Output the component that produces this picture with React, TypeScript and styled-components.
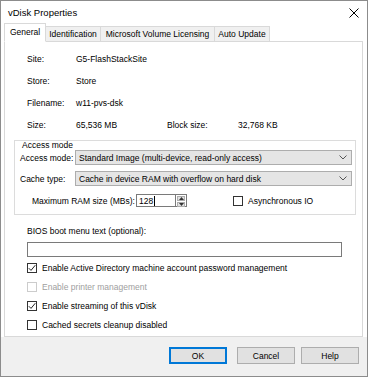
import React from "react";
import styled, { createGlobalStyle } from "styled-components";

const FONT = `"Liberation Sans", Arial, sans-serif`;

const Global = createGlobalStyle`
  html, body { margin: 0; padding: 0; background: #ffffff; }
  body { font-family: ${FONT}; font-size: 8.5px; color: #000; }
  * { box-sizing: border-box; }
`;

const Window = styled.div`
  width: 368px;
  height: 377px;
  border: 1px solid #8c8c8c;
  background: #ffffff;
  display: flex;
  flex-direction: column;
`;

const TitleBar = styled.div`
  height: 23px;
  flex: none;
  display: flex;
  align-items: center;
  justify-content: space-between;
  padding: 0 8px 0 7px;
  font-size: 9.5px;
`;

const CloseBtn = styled.div`
  width: 10px;
  height: 10px;
  display: flex;
  align-items: center;
  justify-content: center;
`;

const TabArea = styled.div`
  flex: 1;
  display: flex;
  flex-direction: column;
  padding: 0 4px 0 3px;
`;

const TabStrip = styled.div`
  height: 18px;
  flex: none;
  display: flex;
  align-items: flex-end;
  margin-bottom: -1px;
  position: relative;
  z-index: 1;
`;

const Tab = styled.div<{ $active?: boolean; $w: number }>`
  width: ${(p) => p.$w}px;
  height: ${(p) => (p.$active ? 19 : 16)}px;
  margin-left: -1px;
  border: 1px solid #d9d9d9;
  border-bottom: ${(p) => (p.$active ? "1px solid #ffffff" : "1px solid #d9d9d9")};
  background: ${(p) => (p.$active ? "#ffffff" : "#f0f0f0")};
  display: flex;
  align-items: center;
  justify-content: center;
  padding-bottom: ${(p) => (p.$active ? 2 : 0)}px;
  white-space: nowrap;
  position: relative;
  z-index: ${(p) => (p.$active ? 2 : 1)};
  &:first-child { margin-left: 0; }
`;

const Panel = styled.div`
  flex: 1;
  border: 1px solid #d9d9d9;
  background: #ffffff;
  display: flex;
  flex-direction: column;
  padding-top: 6px;
`;

const InfoGrid = styled.div`
  display: grid;
  grid-template-columns: 49px 91px 71px auto;
  grid-auto-rows: 22px;
  align-items: center;
  padding-left: 22px;
`;

const GroupBox = styled.div`
  margin: 4px 6px 0 9px;
  border: 1px solid #dcdcdc;
  display: flex;
  flex-direction: column;
  padding: 0 3px 7px 5px;
`;

const Legend = styled.div`
  height: 9px;
  line-height: 9px;
  padding-left: 2px;
`;

const FormRow = styled.div<{ $mt: number; $h: number; $indent?: number }>`
  display: flex;
  align-items: center;
  height: ${(p) => p.$h}px;
  margin-top: ${(p) => p.$mt}px;
  padding-left: ${(p) => p.$indent ?? 0}px;
`;

const RowLabel = styled.div<{ $w?: number }>`
  width: ${(p) => (p.$w ? `${p.$w}px` : "auto")};
  flex: none;
  white-space: nowrap;
`;

const Combo = styled.div`
  flex: 1;
  height: 100%;
  background: #e5e5e5;
  border: 1px solid #adadad;
  display: flex;
  align-items: center;
  justify-content: space-between;
  padding: 0 4px 0 3px;
  white-space: nowrap;
`;

const NumInput = styled.div`
  width: 39px;
  height: 100%;
  border: 1px solid #7a7a7a;
  border-right: none;
  background: #fff;
  display: flex;
  align-items: center;
  padding-left: 2px;
`;

const Caret = styled.span`
  display: inline-block;
  width: 1px;
  height: 10px;
  background: #000;
  margin-left: 1px;
`;

const Spinner = styled.div`
  width: 12px;
  height: 100%;
  border: 1px solid #7a7a7a;
  display: flex;
  flex-direction: column;
  background: #fff;
  padding: 1px;
  gap: 1px;
`;

const SpinHalf = styled.div`
  flex: 1;
  background: #e1e1e1;
  border: 1px solid #adadad;
  display: flex;
  align-items: center;
  justify-content: center;
`;

const CheckWrap = styled.label<{ $disabled?: boolean }>`
  display: flex;
  align-items: center;
  gap: 5px;
  color: ${(p) => (p.$disabled ? "#a0a0a0" : "#000")};
  white-space: nowrap;
`;

const Box = styled.span<{ $disabled?: boolean }>`
  width: 10px;
  height: 10px;
  flex: none;
  border: 1px solid ${(p) => (p.$disabled ? "#cccccc" : "#333333")};
  background: #fff;
  display: flex;
  align-items: center;
  justify-content: center;
`;

const BiosLabel = styled.div`
  margin-top: 11px;
  padding-left: 22px;
  line-height: 11px;
`;

const TextInput = styled.div`
  margin: 5px 0 0 22px;
  width: 315px;
  height: 15px;
  border: 1px solid #7a7a7a;
  background: #fff;
`;

const CheckList = styled.div`
  display: flex;
  flex-direction: column;
  padding: 1px 0 0 22px;
`;

const CheckRow = styled.div`
  height: 19px;
  display: flex;
  align-items: center;
`;

const ButtonBar = styled.div`
  height: 39px;
  flex: none;
  background: #f0f0f0;
  display: flex;
  align-items: center;
  justify-content: flex-end;
  padding: 0 8px 2px 0;
  gap: 6px;
`;

const Button = styled.div<{ $default?: boolean; $mr?: number }>`
  width: 58px;
  height: 17px;
  background: #e1e1e1;
  border: ${(p) => (p.$default ? "2px solid #0078d7" : "1px solid #adadad")};
  display: flex;
  align-items: center;
  justify-content: center;
  margin-right: ${(p) => p.$mr ?? 0}px;
`;

const Chevron = () => (
  <svg width="8" height="5" viewBox="0 0 8 5">
    <path d="M0.5 0.5 L4 4 L7.5 0.5" fill="none" stroke="#555" strokeWidth="1" />
  </svg>
);

const Check = ({ on, disabled, children }: { on?: boolean; disabled?: boolean; children: React.ReactNode }) => (
  <CheckWrap $disabled={disabled}>
    <Box $disabled={disabled}>
      {on && (
        <svg width="8" height="8" viewBox="0 0 8 8">
          <path d="M0.8 4.2 L3 6.4 L7.3 1.2" fill="none" stroke="#222" strokeWidth="1" />
        </svg>
      )}
    </Box>
    {children}
  </CheckWrap>
);

export default function App() {
  return (
    <>
      <Global />
      <Window>
        <TitleBar>
          <span>vDisk Properties</span>
          <CloseBtn>
            <svg width="10" height="10" viewBox="0 0 10 10">
              <path d="M0.5 0.5 L9.5 9.5 M9.5 0.5 L0.5 9.5" stroke="#000" strokeWidth="1" />
            </svg>
          </CloseBtn>
        </TitleBar>
        <TabArea>
          <TabStrip>
            <Tab $active $w={42}>General</Tab>
            <Tab $w={56}>Identification</Tab>
            <Tab $w={115}>Microsoft Volume Licensing</Tab>
            <Tab $w={56}>Auto Update</Tab>
          </TabStrip>
          <Panel>
            <InfoGrid>
              <span>Site:</span>
              <span style={{ gridColumn: "2 / 5" }}>G5-FlashStackSite</span>
              <span>Store:</span>
              <span style={{ gridColumn: "2 / 5" }}>Store</span>
              <span>Filename:</span>
              <span style={{ gridColumn: "2 / 5" }}>w11-pvs-dsk</span>
              <span>Size:</span>
              <span>65,536 MB</span>
              <span>Block size:</span>
              <span>32,768 KB</span>
            </InfoGrid>
            <GroupBox>
              <Legend>Access mode</Legend>
              <FormRow $mt={0} $h={15}>
                <RowLabel $w={55}>Access mode:</RowLabel>
                <Combo>
                  <span>Standard Image (multi-device, read-only access)</span>
                  <Chevron />
                </Combo>
              </FormRow>
              <FormRow $mt={6} $h={15}>
                <RowLabel $w={55}>Cache type:</RowLabel>
                <Combo>
                  <span>Cache in device RAM with overflow on hard disk</span>
                  <Chevron />
                </Combo>
              </FormRow>
              <FormRow $mt={8} $h={13} $indent={12}>
                <RowLabel $w={104}>Maximum RAM size (MBs):</RowLabel>
                <NumInput>
                  128
                  <Caret />
                </NumInput>
                <Spinner>
                  <SpinHalf>
                    <svg width="5" height="3" viewBox="0 0 5 3">
                      <path d="M0 3 L2.5 0 L5 3 Z" fill="#333" />
                    </svg>
                  </SpinHalf>
                  <SpinHalf>
                    <svg width="5" height="3" viewBox="0 0 5 3">
                      <path d="M0 0 L2.5 3 L5 0 Z" fill="#333" />
                    </svg>
                  </SpinHalf>
                </Spinner>
                <RowLabel $w={46} />
                <Check>Asynchronous IO</Check>
              </FormRow>
            </GroupBox>
            <BiosLabel>BIOS boot menu text (optional):</BiosLabel>
            <TextInput />
            <CheckList>
              <CheckRow>
                <Check on>Enable Active Directory machine account password management</Check>
              </CheckRow>
              <CheckRow>
                <Check disabled>Enable printer management</Check>
              </CheckRow>
              <CheckRow>
                <Check on>Enable streaming of this vDisk</Check>
              </CheckRow>
              <CheckRow>
                <Check>Cached secrets cleanup disabled</Check>
              </CheckRow>
            </CheckList>
          </Panel>
        </TabArea>
        <ButtonBar>
          <Button $default $mr={4}>OK</Button>
          <Button>Cancel</Button>
          <Button>Help</Button>
        </ButtonBar>
      </Window>
    </>
  );
}
